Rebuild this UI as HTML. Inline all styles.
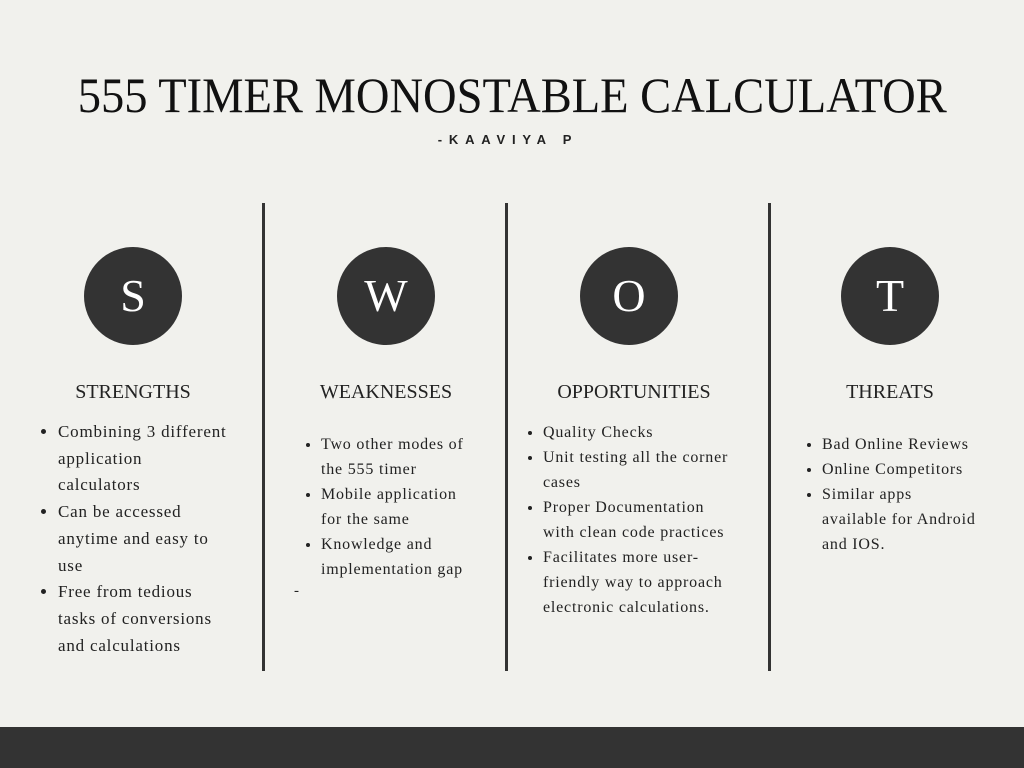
<!DOCTYPE html>
<html><head><meta charset="utf-8"><style>
body{margin:0;width:1024px;height:768px;background:#f1f1ed;position:relative;overflow:hidden;font-family:"Liberation Serif",serif;color:#222}
.a{position:absolute}
.t{left:0;width:1024px;text-align:center;top:66px;font-size:50px;color:#111;white-space:nowrap}
.t span{display:inline-block;transform:scaleX(0.93);transform-origin:center}
.s{left:0;width:1016px;text-align:center;top:132px;font:bold 13px "Liberation Sans",sans-serif;letter-spacing:6.8px;color:#222}
.v{width:3px;background:#333;top:203px;height:468px}
.c{width:98px;height:98px;border-radius:50%;background:#333;color:#fff;font-size:46px;text-align:center;line-height:98px;top:247px}
.h{font-size:20px;top:381px;width:240px;text-align:center;color:#222}
ul{position:absolute;margin:0;padding:0 0 0 18px;color:#222;white-space:nowrap;letter-spacing:0.8px}
.b{left:0;top:727px;width:1024px;height:41px;background:#333}
</style></head><body>
<div class="a t"><span>555 TIMER MONOSTABLE CALCULATOR</span></div>
<div class="a s">-KAAVIYA P</div>
<div class="a v" style="left:262px"></div>
<div class="a v" style="left:505px"></div>
<div class="a v" style="left:768px"></div>
<div class="a c" style="left:84px">S</div>
<div class="a c" style="left:337px">W</div>
<div class="a c" style="left:580px">O</div>
<div class="a c" style="left:841px">T</div>
<div class="a h" style="left:13px">STRENGTHS</div>
<div class="a h" style="left:266px">WEAKNESSES</div>
<div class="a h" style="left:514px">OPPORTUNITIES</div>
<div class="a h" style="left:770px">THREATS</div>
<ul style="left:40px;top:419px;line-height:26.7px;font-size:17px">
<li>Combining 3 different<br>application<br>calculators</li>
<li>Can be accessed<br>anytime and easy to<br>use</li>
<li>Free from tedious<br>tasks of conversions<br>and calculations</li></ul>
<ul style="left:303px;top:432px;line-height:25px;font-size:16px">
<li>Two other modes of<br>the 555 timer</li>
<li>Mobile application<br>for the same</li>
<li>Knowledge and<br>implementation gap</li></ul>
<div class="a" style="left:294px;top:583px;font-size:15px">-</div>
<ul style="left:525px;top:420px;line-height:25px;font-size:16px">
<li>Quality Checks</li>
<li>Unit testing all the corner<br>cases</li>
<li>Proper Documentation<br>with clean code practices</li>
<li>Facilitates more user-<br>friendly way to approach<br>electronic calculations.</li></ul>
<ul style="left:804px;top:432px;line-height:25px;font-size:16px">
<li>Bad Online Reviews</li>
<li>Online Competitors</li>
<li>Similar apps<br>available for Android<br>and IOS.</li></ul>
<div class="a b"></div>
</body></html>
